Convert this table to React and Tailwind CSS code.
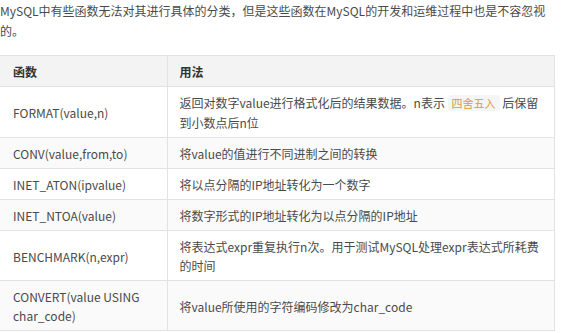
const rows = [
  { fn: 'FORMAT(value,n)', usage: 'format' },
  { fn: 'CONV(value,from,to)', usage: '将value的值进行不同进制之间的转换' },
  { fn: 'INET_ATON(ipvalue)', usage: '将以点分隔的IP地址转化为一个数字' },
  { fn: 'INET_NTOA(value)', usage: '将数字形式的IP地址转化为以点分隔的IP地址' },
  { fn: 'BENCHMARK(n,expr)', usage: '将表达式expr重复执行n次。用于测试MySQL处理expr表达式所耗费的时间' },
  { fn: 'CONVERT(value USING char_code)', usage: '将value所使用的字符编码修改为char_code' },
];

const App = () => {
  return (
    <div
      className="w-[555px] bg-white text-[12px] text-[#4a4a4a]"
      style={{ fontFamily: '"Noto Sans CJK SC", "Noto Sans", sans-serif' }}
    >
      {/* intro paragraph */}
      <p className="pt-[1px] leading-[20px]">
        MySQL中有些函数无法对其进行具体的分类，但是这些函数在MySQL的开发和运维过程中也是不容忽视的。
      </p>

      <table className="mt-[14px] w-full table-fixed border-collapse">
        <colgroup>
          <col className="w-[167px]" />
          <col />
        </colgroup>
        <thead>
          <tr className="bg-[#f3f3f3]">
            <th className="border border-l-0 border-[#e2e2e2] pl-[13px] pr-3 pt-[6px] pb-[5px] text-left font-bold leading-[19px] text-[#333]">
              函数
            </th>
            <th className="border border-[#e2e2e2] pl-[12px] pr-3 pt-[6px] pb-[5px] text-left font-bold leading-[19px] text-[#333]">
              用法
            </th>
          </tr>
        </thead>
        <tbody>
          {rows.map((row, i) => (
            <tr key={row.fn} className={i % 2 === 1 ? 'bg-[#fafafa]' : 'bg-white'}>
              <td className="border border-l-0 border-[#e2e2e2] pl-[13px] pr-3 pt-[6px] pb-[5px] align-middle leading-[19px]">
                {row.fn}
              </td>
              <td className="border border-[#e2e2e2] pl-[12px] pr-3 pt-[6px] pb-[5px] align-middle leading-[19px]">
                {row.usage === 'format' ? (
                  <>
                    返回对数字value进行格式化后的结果数据。n表示{' '}
                    <span className="rounded-[3px] bg-[#f5f5f5] px-[4px] text-[11px] text-[#e0964a]">四舍五入</span>{' '}
                    后保留到小数点后n位
                  </>
                ) : (
                  row.usage
                )}
              </td>
            </tr>
          ))}
        </tbody>
      </table>
    </div>
  );
};

export default App;
